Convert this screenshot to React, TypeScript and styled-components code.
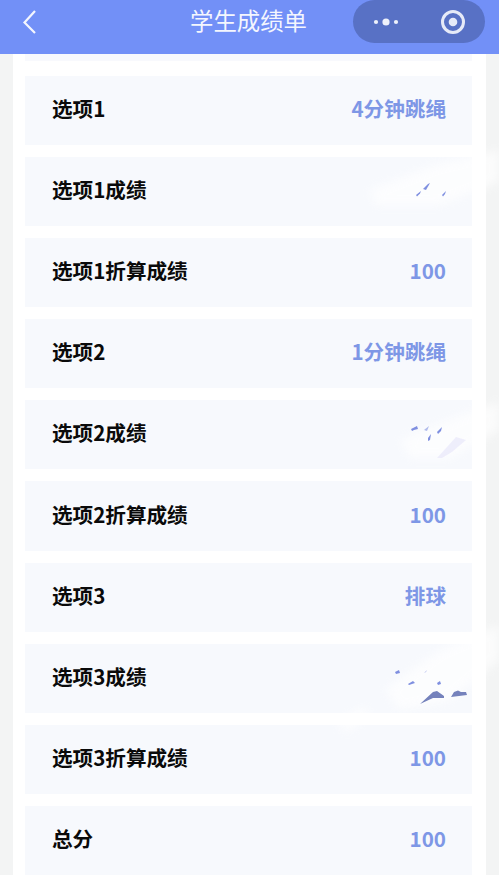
import React from "react";
import styled, { createGlobalStyle } from "styled-components";

const Global = createGlobalStyle`
  html, body { margin: 0; padding: 0; background: #f3f4f4; }
  body { font-family: "Noto Sans CJK SC", "Noto Sans", sans-serif; }
`;

const Page = styled.div`
  position: relative;
  width: 499px;
  height: 875px;
  overflow: hidden;
  background: #f3f4f4;
`;

const Header = styled.header`
  position: relative;
  display: flex;
  align-items: center;
  justify-content: center;
  height: 54px;
  background: #7290f7;
`;

const Back = styled.svg`
  position: absolute;
  left: 22px;
  top: 9px;
  width: 16px;
  height: 26px;
`;

const Title = styled.h1`
  margin: 0 2px 14px 0;
  font-size: 23.4px;
  line-height: 32px;
  font-weight: 400;
  color: #f4f6fe;
`;

const Capsule = styled.div`
  position: absolute;
  left: 353px;
  top: 0;
  width: 132px;
  height: 43px;
  border-radius: 22px;
  background: #5871c5;
  display: flex;
  align-items: center;
  justify-content: space-between;
  padding: 0 19px;
  box-sizing: border-box;
`;

const Card = styled.main`
  display: flex;
  flex-direction: column;
  gap: 12px;
  width: 473px;
  height: 821px;
  margin-left: 13px;
  padding: 0 14px 0 12px;
  box-sizing: border-box;
  background: #ffffff;
  overflow: hidden;
`;

const Strip = styled.div`
  flex: none;
  height: 7px;
  margin-bottom: 3px;
  background: #f8f9fd;
`;

const Row = styled.div`
  flex: none;
  display: flex;
  align-items: center;
  justify-content: space-between;
  height: 69.1px;
  padding: 0 26px 5px 27px;
  box-sizing: border-box;
  background: #f7f9fd;
`;

const Label = styled.span`
  font-size: 20.6px;
  line-height: 28px;
  font-weight: 700;
  color: #0a0a0a;
`;

const Value = styled.span`
  font-size: 20.6px;
  line-height: 28px;
  font-weight: 700;
  color: #7e97e6;
`;

const Marks = styled.svg`
  position: absolute;
  left: 0;
  top: 0;
  width: 499px;
  height: 875px;
  pointer-events: none;
`;

const rows: [string, string][] = [
  ["选项1", "4分钟跳绳"],
  ["选项1成绩", ""],
  ["选项1折算成绩", "100"],
  ["选项2", "1分钟跳绳"],
  ["选项2成绩", ""],
  ["选项2折算成绩", "100"],
  ["选项3", "排球"],
  ["选项3成绩", ""],
  ["选项3折算成绩", "100"],
  ["总分", "100"],
];

export default function App() {
  return (
    <Page>
      <Global />
      <Header>
        <Back viewBox="0 0 16 26" fill="none" stroke="#f4f6fe" strokeWidth="2.2">
          <path d="M13 2 2.500 13.500 13 24" />
        </Back>
        <Title>学生成绩单</Title>
        <Capsule>
          <svg width="28" height="10" viewBox="0 0 28 10" fill="#eef1fb">
            <circle cx="4" cy="5" r="2.100" />
            <circle cx="14" cy="5" r="3.600" />
            <circle cx="24" cy="5" r="2.100" />
          </svg>
          <svg width="26" height="26" viewBox="0 0 26 26" fill="none">
            <circle cx="13" cy="13" r="10.500" stroke="#e6eaf8" strokeWidth="3" />
            <circle cx="13" cy="13" r="4.300" fill="#e6eaf8" />
          </svg>
        </Capsule>
      </Header>
      <Card>
        <Strip />
        {rows.map(([label, value]) => (
          <Row key={label}>
            <Label>{label}</Label>
            <Value>{value}</Value>
          </Row>
        ))}
      </Card>
      <Marks viewBox="0 0 499 875">
        <defs>
          <filter id="haze" x="-30%" y="-60%" width="160%" height="220%">
            <feGaussianBlur stdDeviation="5" />
          </filter>
          <filter id="soft" x="-30%" y="-30%" width="160%" height="160%">
            <feGaussianBlur stdDeviation="0.5" />
          </filter>
        </defs>
        <g filter="url(#haze)" fill="#ffffff" opacity="0.7">
          <path d="M370 190 435 165 499 150V182L440 205 375 205Z" />
          <path d="M400 440 470 412 499 402V430L450 458 410 458Z" />
          <path d="M385 690 440 650 499 625V660L450 700 400 710Z" />
          <path d="M336 725 360 708 372 712 348 732Z" />
        </g>
        <g filter="url(#soft)" fill="#7f8fe0">
          <path d="M416 195 421 191 420 193.500 417 196.500Z" />
          <path d="M423 189 428 184 430 183 426 190Z" />
          <path d="M442 195 446 191 445 194 443 196.500Z" />
          <path d="M411 429 417 426 418 429 414 430 412 431Z" />
          <path d="M424 430 429 426 427 431Z" opacity="0.6" />
          <path d="M437 432 442 427 441 431 438 434Z" />
          <path d="M428 438 431 434 430 440 428 441Z" />
          <path d="M395 672 399 670 400 673 396 674Z" />
          <path d="M408 684 413 681 415 683 409 685Z" />
          <path d="M437 683 440 681 441 684 438 685Z" />
          <path d="M424 673 427 670 426 672Z" opacity="0.6" />
        </g>
        <path d="M437 458 456 437 466 440 452 452 442 458Z" fill="#e9e8fb" opacity="0.7" filter="url(#soft)" />
        <g filter="url(#soft)" fill="#7482bc">
          <path d="M420 704 433 692 437 691 444 696 444 698 433 698Z" />
          <path d="M451 697 454 692 458 690.500 461 692 466 692 467 695 459 696Z" />
        </g>
      </Marks>
    </Page>
  );
}
